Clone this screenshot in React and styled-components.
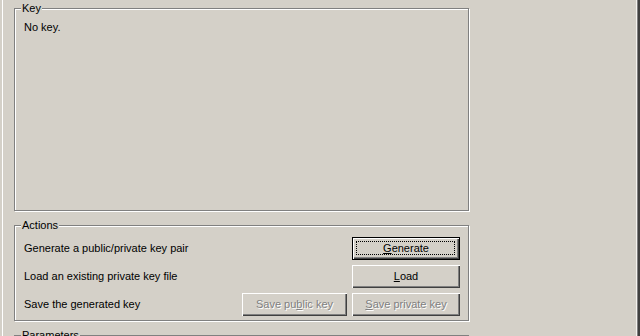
import React from "react";
import styled, { createGlobalStyle } from "styled-components";

const Global = createGlobalStyle`
  html, body { margin: 0; padding: 0; background: #d4d0c8; overflow: hidden; }
  * { box-sizing: border-box; }
`;

const Window = styled.div`
  width: 640px;
  height: 336px;
  overflow: hidden;
  background: #d4d0c8;
  font-family: "Liberation Sans", Arial, sans-serif;
  font-size: 11px;
  line-height: 13px;
  color: #000;
  box-shadow: inset 2px 0 #d4d0c8, inset 3px 0 #ffffff, inset -2px 0 #404040,
    inset -3px 0 #808080, inset -4px 0 #f4f2ee;
  display: flex;
  flex-direction: column;
  gap: 14px;
  padding: 8px 0 0 14px;
`;

const GroupBox = styled.div`
  position: relative;
  flex: none;
  width: 455px;
  height: ${(p) => p.$h}px;
  border: 1px solid #808080;
  box-shadow: 1px 1px 0 #ffffff, inset 1px 1px 0 #ffffff;
  padding: ${(p) => p.$pad};
`;

const Legend = styled.span`
  position: absolute;
  left: 6px;
  top: -7px;
  padding: 0 1px;
  background: #d4d0c8;
  white-space: nowrap;
`;

const Note = styled.div`
  white-space: nowrap;
`;

const ActionGrid = styled.div`
  display: grid;
  grid-template-columns: 1fr 105px 108px;
  grid-auto-rows: 23px;
  column-gap: 5px;
  row-gap: 5px;
  align-items: center;
`;

const RowLabel = styled.div`
  grid-column: 1;
  white-space: nowrap;
`;

const Button = styled.button`
  grid-column: ${(p) => p.$col};
  height: 23px;
  width: 100%;
  margin: 0;
  padding: 0;
  font: inherit;
  background: #d4d0c8;
  color: ${(p) => (p.disabled ? "#808080" : "#000")};
  text-shadow: ${(p) => (p.disabled ? "1px 1px 0 #ffffff" : "none")};
  border: ${(p) => (p.$default ? "1px solid #000" : "none")};
  box-shadow: inset 1px 1px 0 #ffffff, inset -1px -1px 0 #404040,
    inset -2px -2px 0 #808080;
  position: relative;
  cursor: default;
  display: flex;
  align-items: center;
  justify-content: center;
  white-space: nowrap;
  &:focus { outline: none; }
  u { text-decoration: underline; text-underline-offset: 1px; }
`;

const Focus = styled.span`
  position: absolute;
  inset: 3px 4px 4px 3px;
  border: 1px dotted #000;
  pointer-events: none;
`;

export default function App() {
  return (
    <>
      <Global />
      <Window>
        <GroupBox $h={203} $pad="12px 9px">
          <Legend>Key</Legend>
          <Note>No key.</Note>
        </GroupBox>
        <GroupBox $h={96} $pad="11px 8px 0 9px">
          <Legend>Actions</Legend>
          <ActionGrid>
            <RowLabel>Generate a public/private key pair</RowLabel>
            <Button $col={3} $default>
              <Focus />
              <span><u>G</u>enerate</span>
            </Button>
            <RowLabel>Load an existing private key file</RowLabel>
            <Button $col={3}>
              <span><u>L</u>oad</span>
            </Button>
            <RowLabel>Save the generated key</RowLabel>
            <Button $col={2} disabled>
              <span>Save pu<u>b</u>lic key</span>
            </Button>
            <Button $col={3} disabled>
              <span><u>S</u>ave private key</span>
            </Button>
          </ActionGrid>
        </GroupBox>
        <GroupBox $h={60} $pad="10px 9px">
          <Legend>Parameters</Legend>
        </GroupBox>
      </Window>
    </>
  );
}
